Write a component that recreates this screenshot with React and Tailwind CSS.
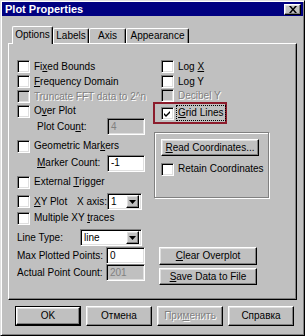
import React from 'react';

const raised =
  'bg-[#c0c0c0] border border-t-white border-l-white border-r-black border-b-black shadow-[inset_-1px_-1px_0_#808080,inset_1px_1px_0_#dfdfdf]';
const sunken =
  'border border-t-[#808080] border-l-[#808080] border-r-white border-b-white shadow-[inset_1px_1px_0_#000,inset_-1px_-1px_0_#dfdfdf]';
const disabledText = 'text-[#808080] [text-shadow:1px_1px_0_#fff]';

function U({ children }) {
  return <span className="underline underline-offset-[1px]">{children}</span>;
}

function Box({ checked, disabled }) {
  return (
    <div
      className={`w-[13px] h-[13px] shrink-0 flex items-center justify-center ${sunken} ${
        disabled ? 'bg-[#c0c0c0]' : 'bg-white'
      }`}
    >
      {checked && (
        <svg width="9" height="9" viewBox="0 0 9 9">
          <path d="M1 4 L3 6 L7 2 L7 4 L3 8 L1 6 Z" fill="#000" />
        </svg>
      )}
    </div>
  );
}

function Check({ children, checked, disabled, className = '' }) {
  return (
    <div className={`flex items-center gap-[4px] whitespace-nowrap ${className}`}>
      <Box checked={checked} disabled={disabled} />
      <span className={disabled ? disabledText : ''}>{children}</span>
    </div>
  );
}

function Field({ value, disabled, w = 'w-[38px]' }) {
  return (
    <div
      className={`${w} h-[17px] ${sunken} ${
        disabled ? 'bg-[#c0c0c0] text-[#808080]' : 'bg-white'
      } flex items-center pl-[3px]`}
    >
      {value}
    </div>
  );
}

function Combo({ value, w }) {
  return (
    <div className={`${w} h-[17px] ${sunken} bg-white flex items-center justify-between pl-[3px] pr-[2px]`}>
      <span>{value}</span>
      <div className={`w-[13px] h-[13px] flex items-center justify-center ${raised}`}>
        <svg width="7" height="4" viewBox="0 0 7 4">
          <path d="M0 0 H7 L3.5 4 Z" fill="#000" />
        </svg>
      </div>
    </div>
  );
}

function Button({ children, className = '', disabled }) {
  return (
    <div
      className={`flex items-center justify-center whitespace-nowrap ${raised} ${className} ${
        disabled ? disabledText : ''
      }`}
    >
      {children}
    </div>
  );
}

export default function App() {
  const tabs = [
    { name: 'Options', w: 'w-[41px]' },
    { name: 'Labels', w: 'w-[36px]' },
    { name: 'Axis', w: 'w-[37px]' },
    { name: 'Appearance', w: 'w-[63px]' },
  ];

  return (
    <div
      className="w-[305px] h-[336px] bg-[#c0c0c0] border border-t-[#dfdfdf] border-l-[#dfdfdf] border-r-black border-b-black shadow-[inset_1px_1px_0_#fff,inset_-1px_-1px_0_#808080] p-[1px] flex flex-col text-[10px] text-black leading-none"
      style={{ fontFamily: '"Liberation Sans", Arial, sans-serif' }}
    >
      {/* title bar */}
      <div className="h-[14px] bg-[#000080] flex items-center justify-between pl-[3px] pr-[2px]">
        <span className="text-white font-bold text-[11px]">Plot Properties</span>
        <div className={`w-[17px] h-[11px] flex items-center justify-center ${raised}`}>
          <svg width="8" height="7" viewBox="0 0 8 7">
            <path d="M0 0 H2 L4 2.5 L6 0 H8 L5 3.5 L8 7 H6 L4 4.5 L2 7 H0 L3 3.5 Z" fill="#000" />
          </svg>
        </div>
      </div>

      {/* tabs */}
      <div className="mt-[10px] h-[17px] pl-[10px] flex items-end relative z-10">
        {tabs.map((t, i) => (
          <div
            key={t.name}
            className={`${t.w} flex items-center justify-center bg-[#c0c0c0] border-t border-l border-t-white border-l-white border-r border-r-black rounded-t-[2px] shadow-[inset_-1px_0_0_#808080] ${
              i === 0 ? 'h-[18px] -mb-[1px] pb-[1px]' : 'h-[15px]'
            }`}
          >
            {t.name}
          </div>
        ))}
      </div>

      {/* panel */}
      <div className="ml-[6px] mr-[6px] h-[257px] border border-t-white border-l-white border-r-black border-b-black shadow-[inset_-1px_-1px_0_#808080] pt-[15px] pl-[8px] flex">
        {/* left column */}
        <div className="w-[136px] flex flex-col">
          <Check className="h-[15px]">
            Fi<U>x</U>ed Bounds
          </Check>
          <Check className="h-[15px]">
            <U>F</U>requency Domain
          </Check>
          <Check className="h-[15px]" disabled>
            Truncate FFT data to 2^n
          </Check>
          <Check className="h-[14px]">
            O<U>v</U>er Plot
          </Check>
          <div className="h-[17px] flex items-center pl-[20px]">
            <span className="w-[70px]">
              Plot Cou<U>n</U>t:
            </span>
            <Field value="4" disabled />
          </div>
          <Check className="h-[14px] mt-[4px]">
            Geometric Mar<U>k</U>ers
          </Check>
          <div className="h-[16px] mt-[2px] flex items-center pl-[20px]">
            <span className="w-[70px]">
              <U>M</U>arker Count:
            </span>
            <Field value="-1" />
          </div>
          <Check className="h-[14px] mt-[4px]">
            External <U>T</U>rigger
          </Check>
          <div className="h-[17px] mt-[4px] flex items-center">
            <Check className="w-[60px]">
              <U>X</U>Y Plot
            </Check>
            <span className="w-[30px]">X axis:</span>
            <Combo value="1" w="w-[35px]" />
          </div>
          <Check className="h-[14px] mt-[1px]">
            Multiple XY <U>t</U>races
          </Check>
          <div className="h-[17px] mt-[4px] flex items-center">
            <span className="w-[63px]">Line Type:</span>
            <Combo value="line" w="w-[62px]" />
          </div>
          <div className="h-[17px] mt-[1px] flex items-center">
            <span className="w-[89px]">Max Plotted Points:</span>
            <Field value="0" w="w-[39px]" />
          </div>
          <div className="h-[17px] flex items-center">
            <span className="w-[89px]">Actual Point Count:</span>
            <Field value="201" disabled w="w-[39px]" />
          </div>
        </div>

        {/* right column */}
        <div className="flex flex-col">
          <Check className="h-[15px] ml-[8px]">
            Log <U>X</U>
          </Check>
          <Check className="h-[15px] ml-[8px]">
            Lo<U>g</U> Y
          </Check>
          <Check className="h-[13px] ml-[8px]" disabled>
            Decibel Y
          </Check>
          <div className="w-[74px] h-[22px] border-2 border-[#8c1c2c] flex items-center pl-[6px] gap-[2px] whitespace-nowrap">
            <Box checked />
            <span className="border border-dotted border-black px-[1px] py-[2px]">
              <U>G</U>rid Lines
            </span>
          </div>
          <div className="mt-[8px] ml-[1px] w-[115px] h-[66px] border border-[#808080] shadow-[1px_1px_0_#fff,inset_1px_1px_0_#fff] pt-[6px] pl-[6px] flex flex-col">
            <Button className="w-[98px] h-[17px]">
              <span>
                <U>R</U>ead Coordinates...
              </span>
            </Button>
            <Check className="h-[14px] mt-[6px]">Retain Coordinates</Check>
          </div>
          <Button className="w-[98px] h-[18px] ml-[6px] mt-[49px]">
            <span>
              <U>C</U>lear Overplot
            </span>
          </Button>
          <Button className="w-[98px] h-[17px] ml-[6px] mt-[3px]">
            <span>
              <U>S</U>ave Data to File
            </span>
          </Button>
        </div>
      </div>

      {/* bottom buttons */}
      <div className="mt-[6px] pl-[13px] flex gap-[5px]">
        <div className="w-[66px] h-[20px] border border-black flex">
          <Button className="flex-1">OK</Button>
        </div>
        <Button className="w-[66px] h-[20px]">Отмена</Button>
        <Button className="w-[66px] h-[20px]" disabled>
          <span>
            При<U>м</U>енить
          </span>
        </Button>
        <Button className="w-[66px] h-[20px]">Справка</Button>
      </div>
    </div>
  );
}
